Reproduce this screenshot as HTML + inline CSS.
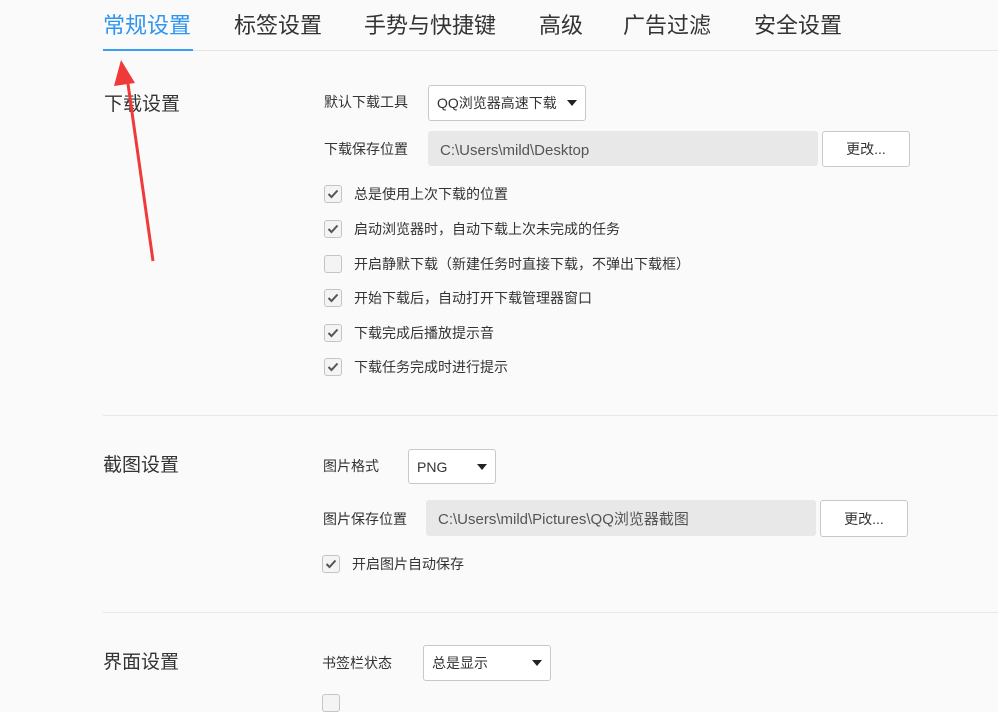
<!DOCTYPE html><html><head><meta charset="utf-8"><style>
body{margin:0;width:998px;height:700px;background:#fafafa;overflow:hidden;position:relative;font-family:"Liberation Sans","Noto Sans CJK SC",sans-serif;color:#333}
.a{position:absolute;white-space:nowrap}
.tab{font-size:22px;color:#333;top:8px}
.sec{font-size:19px;color:#333}
.lbl{font-size:14px;color:#333}
.sel{position:absolute;border:1px solid #c8c8c8;border-radius:3px;background:#fff;font-size:14px;box-sizing:border-box;padding-left:8px;display:flex;align-items:center}
.sel:after{content:"";position:absolute;right:8px;top:50%;margin-top:-3px;border:5px solid transparent;border-top:6px solid #222;border-bottom:0}
.inp{position:absolute;background:#e8e8e8;border-radius:3px;font-size:15px;color:#555;box-sizing:border-box;padding-left:12px;display:flex;align-items:center}
.btn{position:absolute;border:1px solid #c8c8c8;border-radius:3px;background:#fff;font-size:14px;display:flex;align-items:center;justify-content:center;box-sizing:border-box}
.cb{position:absolute;width:18px;height:18px;border:1px solid #c4c4c4;border-radius:3px;background:#f4f4f4;box-sizing:border-box}
.cb svg{position:absolute;left:2px;top:3px}
.ct{position:absolute;font-size:14px;color:#333}
.hr{position:absolute;left:103px;right:0;height:1px;background:#e8e8e8}
</style></head><body>
<div class="a tab" style="left:103px;color:#2e95f0">常规设置</div>
<div class="a tab" style="left:234px">标签设置</div>
<div class="a tab" style="left:364px">手势与快捷键</div>
<div class="a tab" style="left:539px">高级</div>
<div class="a tab" style="left:623px">广告过滤</div>
<div class="a tab" style="left:754px">安全设置</div>
<div class="a" style="left:103px;right:0;top:50px;height:1px;background:#e6e6e6"></div>
<div class="a" style="left:103px;width:90px;top:49px;height:2px;background:#3a9cf5"></div>

<div class="a sec" style="left:104px;top:89px">下载设置</div>
<div class="a lbl" style="left:324px;top:92px">默认下载工具</div>
<div class="sel" style="left:428px;top:85px;width:158px;height:36px">QQ浏览器高速下载</div>
<div class="a lbl" style="left:324px;top:139px">下载保存位置</div>
<div class="inp" style="left:428px;top:131px;width:390px;height:35px;padding-top:3px">C:\Users\mild\Desktop</div>
<div class="btn" style="left:822px;top:131px;width:88px;height:36px">更改...</div>

<div class="hr" style="top:415px"></div>
<div class="a sec" style="left:103px;top:450px">截图设置</div>
<div class="a lbl" style="left:323px;top:456px">图片格式</div>
<div class="sel" style="left:408px;top:449px;width:88px;height:35px">PNG</div>
<div class="a lbl" style="left:323px;top:509px">图片保存位置</div>
<div class="inp" style="left:426px;top:500px;width:390px;height:36px">C:\Users\mild\Pictures\QQ浏览器截图</div>
<div class="btn" style="left:820px;top:500px;width:88px;height:37px">更改...</div>

<div class="hr" style="top:612px"></div>
<div class="a sec" style="left:103px;top:647px">界面设置</div>
<div class="a lbl" style="left:322px;top:653px">书签栏状态</div>
<div class="sel" style="left:423px;top:645px;width:128px;height:36px">总是显示</div>

<div id="cbs"></div>
<script>
var rows=[[324,185,1,"总是使用上次下载的位置"],[324,220,1,"启动浏览器时，自动下载上次未完成的任务"],[324,255,0,"开启静默下载（新建任务时直接下载，不弹出下载框）"],[324,289,1,"开始下载后，自动打开下载管理器窗口"],[324,324,1,"下载完成后播放提示音"],[324,358,1,"下载任务完成时进行提示"],[322,555,1,"开启图片自动保存"],[322,694,0,""]];
var h="";rows.forEach(function(r){h+='<div class="cb" style="left:'+r[0]+'px;top:'+r[1]+'px">'+(r[2]?'<svg width="12" height="10" viewBox="0 0 12 10"><path d="M1.5 5 L4.5 8 L10.5 1.5" fill="none" stroke="#555" stroke-width="2"/></svg>':'')+'</div><div class="ct" style="left:'+(r[0]+30)+'px;top:'+(r[1]-1)+'px">'+r[3]+'</div>';});
document.getElementById("cbs").innerHTML=h;
</script>
<svg class="a" style="left:0;top:0" width="998" height="700"><path d="M153 261 L128 84" stroke="#f03a3a" stroke-width="3" fill="none"/><path d="M121 60 L114 86 L135 83 Z" fill="#f03a3a"/></svg>
</body></html>
